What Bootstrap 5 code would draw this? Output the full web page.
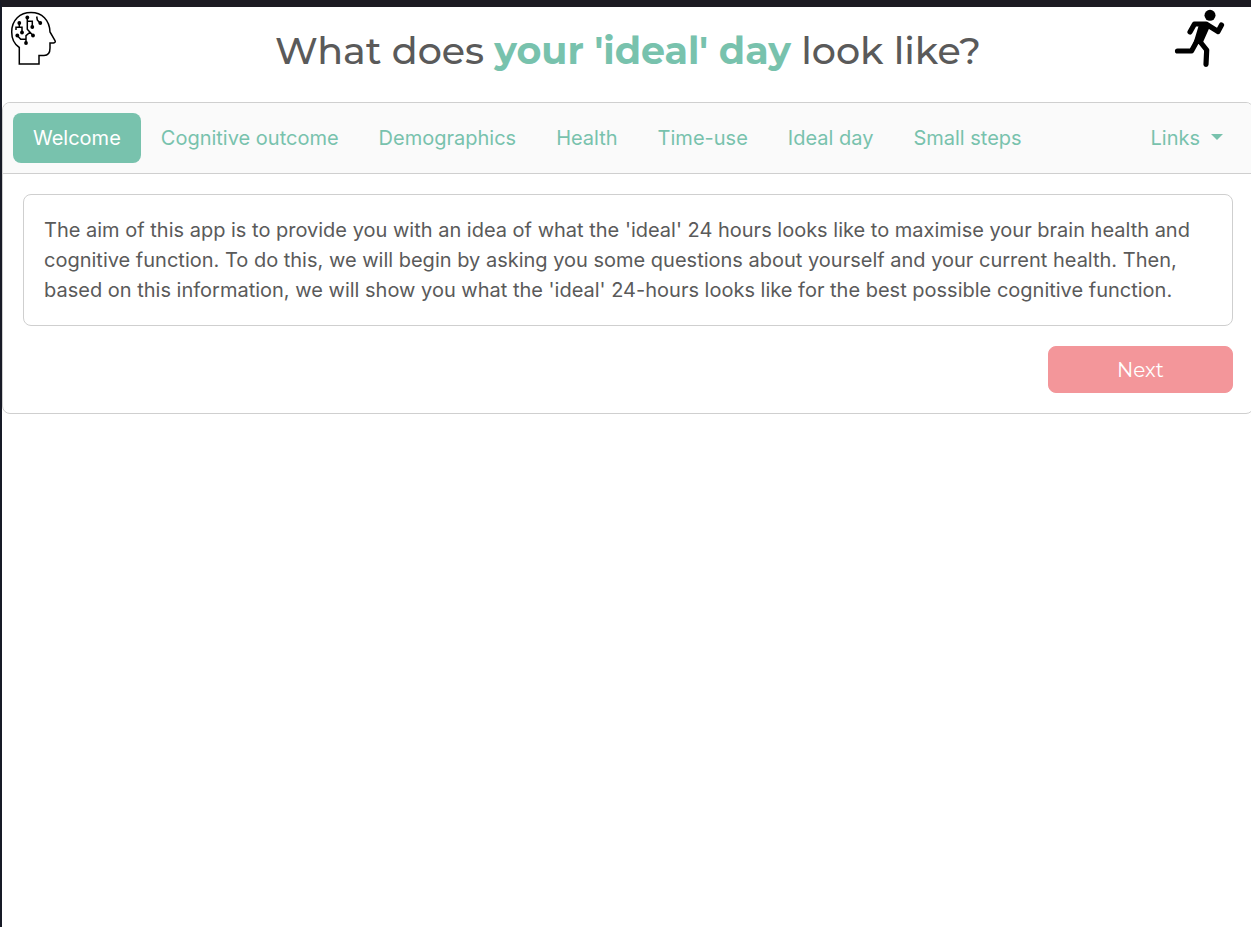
<!DOCTYPE html>
<html lang="en">
<head>
<meta charset="utf-8">
<meta name="viewport" content="width=device-width, initial-scale=1">
<title>What does your 'ideal' day look like?</title>
<link href="https://cdn.jsdelivr.net/npm/bootstrap@5.3.0/dist/css/bootstrap.min.css" rel="stylesheet">
<style>
:root { --mint: #78c2ad; --salmon: #f3969a; --ink: #5a5a5a; --line: #cfcfcf; }
body {
  font-family: Inter, "Liberation Sans", sans-serif;
  font-size: 20px; line-height: 30px; color: var(--ink); background: #fff;
  border-top: 7px solid #1c1b22; border-left: 2px solid #171a26;
  min-height: 100vh; overflow-x: hidden;
}
.app-header { height: 95px; margin-right: -3px; }
.app-title { font-family: Montserrat, Inter, sans-serif; font-size: 38px; line-height: 48px; font-weight: 500; margin-top: 20px; }
.app-title b { color: var(--mint); font-weight: 700; }
.header-side { flex: 1 1 0; }
.head-icon { width: 48px; height: 58px; margin: 2px 0 0 8px; }
.run-icon { width: 52px; height: 60px; margin: 2px 29px 0 0; }
.app-card { --bs-card-border-color: var(--line); --bs-card-border-radius: 8px; --bs-card-inner-border-radius: 7px; --bs-card-color: var(--ink); margin-right: -3px; }
.app-card > .card-header { padding: 10px; background: #fafafa; }
.app-card > .card-body { padding: 20px; }
.text-card { --bs-card-border-color: var(--line); --bs-card-border-radius: 8px; --bs-card-spacer-x: 20px; --bs-card-spacer-y: 20px; margin-bottom: 20px; }
.nav-pills { --bs-nav-link-padding-x: 20px; --bs-nav-link-padding-y: 10px; --bs-nav-link-color: var(--mint); --bs-nav-link-hover-color: #4e9f88; --bs-nav-pills-border-radius: 8px; --bs-nav-pills-link-active-bg: var(--mint); }
.nav-pills .dropdown-toggle::after { margin-left: 11px; }
.btn-next { --bs-btn-bg: var(--salmon); --bs-btn-color: #fff; --bs-btn-border-color: var(--salmon); --bs-btn-hover-bg: #e97f84; --bs-btn-hover-color: #fff; --bs-btn-border-radius: 8px; --bs-btn-line-height: 30px; --bs-btn-font-size: 20px; width: 185px; height: 47px; font-family: Montserrat, Inter, sans-serif; }
</style>
</head>
<body>
<header class="app-header d-flex align-items-start">
  <div class="header-side d-flex">
    <svg class="head-icon" viewBox="0 0 48 58" fill="none" stroke="#000" stroke-width="1.500" aria-hidden="true">
      <path d="M9.300 55V38.500C4 35 1.700 29 1.700 23C1.700 11 10 3.500 21 3.500C32 3.500 39.500 11 40 23L45 31.500Q46 33.500 43.500 34H40V39C40 44 38 46.500 34 46.500H29V55Z"/>
      <path d="M9.300 14V18.300M6 21V18.300H12V23M17.300 9V20.300L23 26.500M17.300 12.300H22.300V18M20 23.300L16 26.700V33M7.300 26.500L10.700 30.300H16M26.700 7.500L27.300 11L30 14"/>
      <g fill="#000" stroke="none"><circle cx="9.300" cy="14" r="1.900"/><circle cx="12" cy="23.500" r="1.900"/><circle cx="17.300" cy="8.500" r="1.900"/><circle cx="22.300" cy="18" r="1.900"/><circle cx="23" cy="26.500" r="1.900"/><circle cx="16" cy="34" r="1.900"/><circle cx="7.300" cy="26.500" r="1.900"/><circle cx="30.300" cy="14" r="1.900"/></g>
    </svg>
  </div>
  <h1 class="app-title mb-0">What does <b>your 'ideal' day</b> look like?</h1>
  <div class="header-side d-flex justify-content-end">
    <svg class="run-icon" viewBox="0 0 52 60" fill="none" stroke="#000" stroke-linecap="round" stroke-linejoin="round" aria-hidden="true">
      <circle cx="37" cy="6.300" r="5.500" fill="#000" stroke="none"/>
      <path stroke-width="5.200" d="M17 23L21.500 15H33L45 22.500L48.500 16M4.500 42H18.500L24 32M26.500 32L33.700 41L33 55.300"/>
      <path fill="#000" stroke-width="2" d="M27.500 14L36.500 16L28.500 34H21.500Z"/>
    </svg>
  </div>
</header>
<main class="card app-card">
  <div class="card-header">
    <ul class="nav nav-pills">
      <li class="nav-item"><a class="nav-link active" aria-current="page" href="#welcome">Welcome</a></li>
      <li class="nav-item"><a class="nav-link" href="#cognitive">Cognitive outcome</a></li>
      <li class="nav-item"><a class="nav-link" href="#demographics">Demographics</a></li>
      <li class="nav-item"><a class="nav-link" href="#health">Health</a></li>
      <li class="nav-item"><a class="nav-link" href="#time-use">Time-use</a></li>
      <li class="nav-item"><a class="nav-link" href="#ideal-day">Ideal day</a></li>
      <li class="nav-item"><a class="nav-link" href="#small-steps">Small steps</a></li>
      <li class="nav-item dropdown ms-auto"><a class="nav-link dropdown-toggle" href="#links" role="button" aria-expanded="false">Links</a></li>
    </ul>
  </div>
  <div class="card-body" id="welcome">
    <div class="card text-card">
      <div class="card-body">The aim of this app is to provide you with an idea of what the 'ideal' 24 hours looks like to maximise your brain health and cognitive function. To do this, we will begin by asking you some questions about yourself and your current health. Then, based on this information, we will show you what the 'ideal' 24-hours looks like for the best possible cognitive function.</div>
    </div>
    <div class="d-flex justify-content-end">
      <button type="button" class="btn btn-next">Next</button>
    </div>
  </div>
</main>
<script src="https://cdn.jsdelivr.net/npm/bootstrap@5.3.0/dist/js/bootstrap.bundle.min.js"></script>
</body>
</html>
